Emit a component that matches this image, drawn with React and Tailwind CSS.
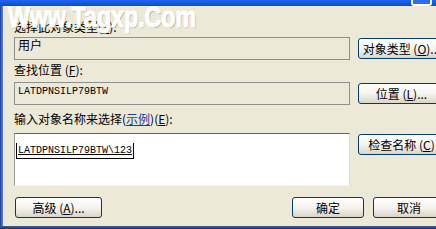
import React from "react";

const cjk = "font-['Noto_Sans_CJK_SC','Noto_Sans',sans-serif]";
const mono = "font-['Liberation_Mono','DejaVu_Sans_Mono',monospace]";

// --- XP style push button ---
const XpButton = ({ children, className = "" }) => (
  <div
    className={`h-[21px] shrink-0 flex items-center justify-center overflow-hidden whitespace-nowrap rounded-[3px] border border-[#003c74] bg-linear-to-b from-[#ffffff] via-[#f5f4ef] to-[#d9d5c9] text-[12px] leading-[14px] text-black ${className}`}
  >
    {children}
  </div>
);

const Key = ({ k }) => <span className="underline">{k}</span>;

const ReadonlyBox = ({ children, textClass }) => (
  <div className={`w-[336px] h-[23px] shrink-0 border border-[#8e8f8f] bg-[#ece9d8] pl-[3px] text-black ${textClass}`}>
    {children}
  </div>
);

export default function App() {
  return (
    <div className={`relative w-[436px] h-[229px] overflow-hidden bg-[#ece9d8] flex flex-col ${cjk}`}>
      {/* title bar strip */}
      <div className="h-[6px] shrink-0 flex bg-linear-to-b from-[#1f66ea] to-[#0a4cd2]">
        <div className="ml-auto mr-[4px] w-[21px] h-[6px] rounded-b-[3px] border-2 border-t-0 border-white bg-[#2e6ff0]" />
      </div>

      <div className="flex-1 flex min-h-0">
        {/* left frame */}
        <div className="w-[3px] shrink-0 bg-linear-to-r from-[#173e9e] to-[#6f86bf]" />

        <div className="flex-1 flex flex-col pl-[11px]">
          <div className="mt-[15px] h-[12px] text-[12px] leading-[12px] whitespace-nowrap">
            选择此对象类型(<Key k="S" />):
          </div>

          <div className="mt-[4px] flex items-center gap-[8px]">
            <ReadonlyBox textClass="text-[12px] leading-[14px]">用户</ReadonlyBox>
            <XpButton className="w-[87px]">
              对象类型 (<Key k="O" />)...
            </XpButton>
          </div>

          <div className="mt-[4px] h-[12px] text-[12px] leading-[12px] whitespace-nowrap">
            查找位置 (<Key k="F" />):
          </div>

          <div className="mt-[6px] flex items-center gap-[8px]">
            <ReadonlyBox textClass={`${mono} text-[10px] leading-[14px] pt-[2px]`}>LATDPNSILP79BTW</ReadonlyBox>
            <XpButton className="w-[87px]">
              位置 (<Key k="L" />)...
            </XpButton>
          </div>

          <div className="mt-[8px] h-[12px] text-[12px] leading-[12px] whitespace-nowrap">
            输入对象名称来选择(<span className="text-[#1b3c9a] underline">示例</span>)(<Key k="E" />):
          </div>

          <div className="mt-[8px] flex items-start gap-[8px]">
            <div className="w-[336px] h-[53px] shrink-0 bg-white border border-t-[#5f5f5f] border-l-[#9a9a9a] border-r-[#dedbd0] border-b-[#f4f2ea] pl-[1px]">
              <div className={`inline-block h-[16px] px-[1px] border-x border-b border-black ${mono} text-[10px] leading-[14px] pt-[1px] text-black underline`}>
                LATDPNSILP79BTW\123
              </div>
            </div>
            <XpButton className="mt-[1px] w-[87px]">
              检查名称 (<Key k="C" />)
            </XpButton>
          </div>

          <div className="mt-[11px] flex">
            <XpButton className="ml-[1px] w-[87px]">
              高级 (<Key k="A" />)...
            </XpButton>
            <XpButton className="ml-[190px] w-[72px]">确定</XpButton>
            <XpButton className="ml-[9px] w-[72px]">取消</XpButton>
          </div>
        </div>
      </div>

      {/* bottom frame */}
      <div className="h-[3px] shrink-0 bg-linear-to-b from-[#4a5f94] to-[#1b2f6e]" />

      {/* watermark */}
      <div className="absolute left-[8px] top-[3px] origin-left scale-x-[0.8] whitespace-nowrap font-['Liberation_Sans',Arial,sans-serif] font-bold text-[29px] leading-[29px] text-white [-webkit-text-stroke:1px_white] [text-shadow:1px_1px_1px_rgba(0,0,0,0.3)]">
        Www.Tagxp.Com
      </div>
    </div>
  );
}
